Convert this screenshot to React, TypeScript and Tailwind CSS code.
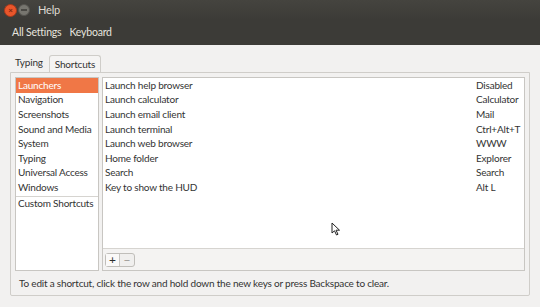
import React from "react";

const categories = [
  "Launchers",
  "Navigation",
  "Screenshots",
  "Sound and Media",
  "System",
  "Typing",
  "Universal Access",
  "Windows",
];

const shortcuts: [string, string][] = [
  ["Launch help browser", "Disabled"],
  ["Launch calculator", "Calculator"],
  ["Launch email client", "Mail"],
  ["Launch terminal", "Ctrl+Alt+T"],
  ["Launch web browser", "WWW"],
  ["Home folder", "Explorer"],
  ["Search", "Search"],
  ["Key to show the HUD", "Alt L"],
];

export default function App() {
  return (
    <div
      className="w-[540px] h-[307px] flex flex-col overflow-hidden bg-[#f2f1f0] text-[#333333] relative whitespace-nowrap tracking-[-0.2px]"
      style={{ fontFamily: 'Lato, "Noto Sans", sans-serif' }}
    >
      {/* Title bar */}
      <div className="h-[20px] bg-gradient-to-b from-[#45443f] to-[#3c3b37] flex items-center pl-[4px]">
        <div className="w-[13px] h-[13px] rounded-full bg-[#e9562b] border border-[#a83a1c] flex items-center justify-center text-[#7a2510] text-[8px] leading-none font-bold">
          ×
        </div>
        <div className="ml-[1px] w-[12px] h-[12px] rounded-full bg-[#77766f] border border-[#55544f] flex items-center justify-center">
          <div className="w-[6px] h-[2px] bg-[#4a4944]" />
        </div>
        <span className="ml-[8px] text-[11px] text-[#dfdbd2]">Help</span>
      </div>
      {/* Toolbar */}
      <div className="h-[25px] bg-[#3c3b37] flex items-center pl-[12px] gap-[8px] text-[10.5px] text-[#e6e4df]">
        <span>All Settings</span>
        <span>Keyboard</span>
      </div>
      {/* Content */}
      <div className="flex-1 flex flex-col px-[10px] pt-[10px]">
        {/* Tabs */}
        <div className="flex items-end pl-[5px] h-[17px] text-[10px]">
          <span className="pb-[2px] pr-[6px]">Typing</span>
          <div className="h-[17px] px-[5px] border border-b-0 border-[#cfcdc9] rounded-t-[3px] bg-[#f5f4f3] flex items-center">
            Shortcuts
          </div>
        </div>
        {/* Notebook frame */}
        <div className="h-[224px] border border-[#cfcdc9] rounded-b-[2px] flex flex-col px-[4px] pt-[4px] text-[10px]">
          <div className="flex gap-[3px] h-[194px]">
            {/* Category list */}
            <div className="w-[84px] bg-white border border-[#c8c6c2] flex flex-col">
              {categories.map((c, i) => (
                <div
                  key={c}
                  className={
                    "h-[14.6px] flex items-center pl-[2px] " +
                    (i === 0 ? "bg-[#f07746] text-white" : "")
                  }
                >
                  {c}
                </div>
              ))}
              <div className="mt-[1px] border-t border-[#d6d4d0] h-[15px] flex items-center pl-[2px]">
                Custom Shortcuts
              </div>
            </div>
            {/* Shortcut tree */}
            <div className="flex-1 flex flex-col border border-[#c8c6c2]">
              <div className="flex-1 bg-white">
                {shortcuts.map(([a, b]) => (
                  <div key={a} className="h-[14.6px] flex items-center pl-[2px]">
                    <span className="flex-1">{a}</span>
                    <span className="w-[48px]">{b}</span>
                  </div>
                ))}
              </div>
              <div className="h-[22px] border-t border-[#d6d4d0] bg-[#f4f3f2] flex items-center pl-[2px]">
                <div className="flex h-[14px] border border-[#c0beba] rounded-[3px] bg-[#f0efee]">
                  <div className="w-[14px] flex items-center justify-center text-[12px] leading-none text-[#2e2e2e] border-r border-[#c8c6c2] bg-[#faf9f8]">
                    +
                  </div>
                  <div className="w-[14px] flex items-center justify-center text-[12px] leading-none text-[#9a9893]">
                    −
                  </div>
                </div>
              </div>
            </div>
          </div>
          <div className="flex-1 flex items-center pl-[4px]">
            To edit a shortcut, click the row and hold down the new keys or press Backspace to clear.
          </div>
        </div>
      </div>
      {/* Mouse cursor */}
      <svg className="absolute left-[331px] top-[222px]" width="10" height="14" viewBox="0 0 10 14">
        <path d="M1 1 L1 11 L3.5 8.8 L5.5 13 L7 12.3 L5 8.2 L8.5 8.2 Z" fill="#fff" stroke="#222" strokeWidth="1" strokeLinejoin="round" />
      </svg>
    </div>
  );
}
